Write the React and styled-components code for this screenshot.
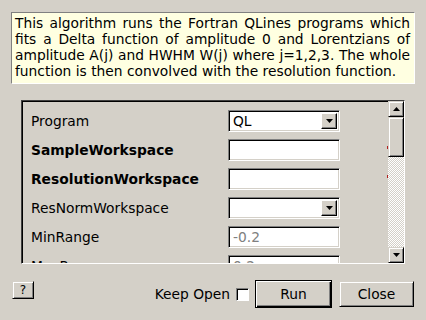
import React from 'react'
import styled, { createGlobalStyle } from 'styled-components';

const GlobalStyle = createGlobalStyle`
  html, body {
    margin: 0;
    padding: 0;
    background: #d4d0c8;
  }
  body {
    font-family: "DejaVu Sans", "Liberation Sans", sans-serif;
    font-size: 13.8px;
    color: #000;
  }
`;

const rows = [
  { label: 'Program', kind: 'combo', value: 'QL' },
  { label: 'SampleWorkspace', kind: 'text', bold: true, required: true },
  { label: 'ResolutionWorkspace', kind: 'text', bold: true, required: true },
  { label: 'ResNormWorkspace', kind: 'combo', value: '' },
  { label: 'MinRange', kind: 'text', placeholder: '-0.2' },
  { label: 'MaxRange', kind: 'text', placeholder: '0.2' },
];

const DownArrow = () => (
  <svg width="7" height="4" viewBox="0 0 7 4">
    <path d="M0 0H7L3.5 4Z" fill="#000" />
  </svg>
);

const UpArrow = () => (
  <svg width="7" height="4" viewBox="0 0 7 4">
    <path d="M0 4H7L3.5 0Z" fill="#000" />
  </svg>
);

const App = () => {
  return (
    <Dialog>
      <GlobalStyle />
      <Info>
        This algorithm runs the Fortran QLines programs which fits a Delta function of
        amplitude 0 and Lorentzians of amplitude A(j) and HWHM W(j) where j=1,2,3. The
        whole function is then convolved with the resolution function.
      </Info>
      <Panel>
        <Viewport>
          {rows.map((row) => (
            <Row key={row.label}>
              <Label bold={row.bold}>{row.label}</Label>
              {row.kind === 'combo' ? (
                <Combo>
                  <ComboText>{row.value}</ComboText>
                  <ComboButton><DownArrow /></ComboButton>
                </Combo>
              ) : (
                <TextField>
                  {row.placeholder && <Placeholder>{row.placeholder}</Placeholder>}
                </TextField>
              )}
              <Marker>{row.required && <RedDot />}</Marker>
            </Row>
          ))}
        </Viewport>
        <ScrollBar>
          <ScrollButton><UpArrow /></ScrollButton>
          <Thumb />
          <Track />
          <ScrollButton><DownArrow /></ScrollButton>
        </ScrollBar>
      </Panel>
      <ButtonRow>
        <HelpButton>?</HelpButton>
        <Spacer />
        <KeepOpen>
          Keep Open
          <CheckBox />
        </KeepOpen>
        <DefaultButton>Run</DefaultButton>
        <Button>Close</Button>
      </ButtonRow>
    </Dialog>
  )
}

const Dialog = styled.div`
  width: 426px;
  height: 320px;
  box-sizing: border-box;
  padding-top: 12px;
  display: flex;
  flex-direction: column;
  overflow: hidden;
`;

const Info = styled.div`
  margin: 0 11px;
  height: 72px;
  box-sizing: border-box;
  padding: 2px 4px 0 3px;
  background: #ffffe1;
  border-top: 1px solid #808080;
  border-left: 1px solid #808080;
  border-right: 1px solid #fff;
  border-bottom: 1px solid #fff;
  line-height: 16px;
  text-align: justify;
`;

const Panel = styled.div`
  margin: 16px 21px 0 21px;
  height: 164px;
  box-sizing: border-box;
  display: flex;
  border-top: 1px solid #404040;
  border-left: 1px solid #404040;
  border-right: 1px solid #fff;
  border-bottom: 1px solid #fff;
  box-shadow: inset 1px 1px 0 #000;
  overflow: hidden;
`;

const Viewport = styled.div`
  flex: 1;
  display: flex;
  flex-direction: column;
  gap: 7px;
  padding: 9px 0 0 9px;
  overflow: hidden;
`;

const Row = styled.div`
  display: grid;
  grid-template-columns: 197px 112px 1fr;
  align-items: center;
  height: 22px;
  flex: none;
`;

const Label = styled.div`
  font-weight: ${(p) => (p.bold ? 'bold' : 'normal')};
  white-space: nowrap;
`;

const Sunken = styled.div`
  box-sizing: border-box;
  height: 22px;
  background: #fff;
  border-top: 1px solid #808080;
  border-left: 1px solid #808080;
  border-right: 1px solid #fff;
  border-bottom: 1px solid #fff;
  box-shadow: inset 1px 1px 0 #000, inset -1px -1px 0 #d4d0c8;
`;

const Combo = styled(Sunken)`
  display: flex;
  align-items: center;
  padding: 2px;
`;

const ComboText = styled.div`
  flex: 1;
  padding-left: 2px;
  line-height: 16px;
`;

const ComboButton = styled.div`
  width: 16px;
  height: 16px;
  box-sizing: border-box;
  background: #d4d0c8;
  border-top: 1px solid #fff;
  border-left: 1px solid #fff;
  border-right: 1px solid #000;
  border-bottom: 1px solid #000;
  box-shadow: inset -1px -1px 0 #808080;
  display: flex;
  align-items: center;
  justify-content: center;
`;

const TextField = styled(Sunken)`
  display: flex;
  align-items: center;
  padding: 0 4px;
`;

const Placeholder = styled.span`
  color: #808080;
`;

const Marker = styled.div`
  display: flex;
  justify-content: flex-end;
`;

const RedDot = styled.div`
  width: 3px;
  height: 3px;
  background: #b02020;
  margin-top: -4px;
  margin-right: -2px;
`;

const ScrollBar = styled.div`
  width: 16px;
  display: flex;
  flex-direction: column;
`;

const raised = `
  box-sizing: border-box;
  background: #d4d0c8;
  border-top: 1px solid #d4d0c8;
  border-left: 1px solid #d4d0c8;
  border-right: 1px solid #000;
  border-bottom: 1px solid #000;
  box-shadow: inset 1px 1px 0 #fff, inset -1px -1px 0 #808080;
`;

const ScrollButton = styled.div`
  ${raised}
  height: 16px;
  flex: none;
  display: flex;
  align-items: center;
  justify-content: center;
`;

const Thumb = styled.div`
  ${raised}
  height: 40px;
  flex: none;
`;

const Track = styled.div`
  flex: 1;
  background: repeating-conic-gradient(#fff 0 25%, #d4d0c8 0 50%) 0 0 / 2px 2px;
`;

const ButtonRow = styled.div`
  display: flex;
  align-items: flex-start;
  padding: 16px 12px 0 12px;
  gap: 7px;
`;

const Spacer = styled.div`
  flex: 1;
`;

const Button = styled.button`
  ${raised}
  font-family: "DejaVu Sans", "Liberation Sans", sans-serif;
  font-size: 13.8px;
  color: #000;
  width: 75px;
  height: 26px;
  margin-top: 1px;
  padding: 0;
`;

const HelpButton = styled(Button)`
  width: 22px;
  height: 18px;
  font-size: 12px;
`;

const DefaultButton = styled(Button)`
  width: 77px;
  height: 28px;
  margin-top: 0;
  border: 1px solid #000;
  box-shadow: inset 1px 1px 0 #fff, inset -1px -1px 0 #000, inset -2px -2px 0 #808080;
`;

const KeepOpen = styled.label`
  display: flex;
  align-items: center;
  gap: 6px;
  height: 28px;
  margin-right: -1px;
`;

const CheckBox = styled.span`
  display: inline-block;
  width: 13px;
  height: 13px;
  box-sizing: border-box;
  background: #fff;
  border-top: 1px solid #808080;
  border-left: 1px solid #808080;
  border-right: 1px solid #fff;
  border-bottom: 1px solid #fff;
  box-shadow: inset 1px 1px 0 #000;
`;

export default App;
